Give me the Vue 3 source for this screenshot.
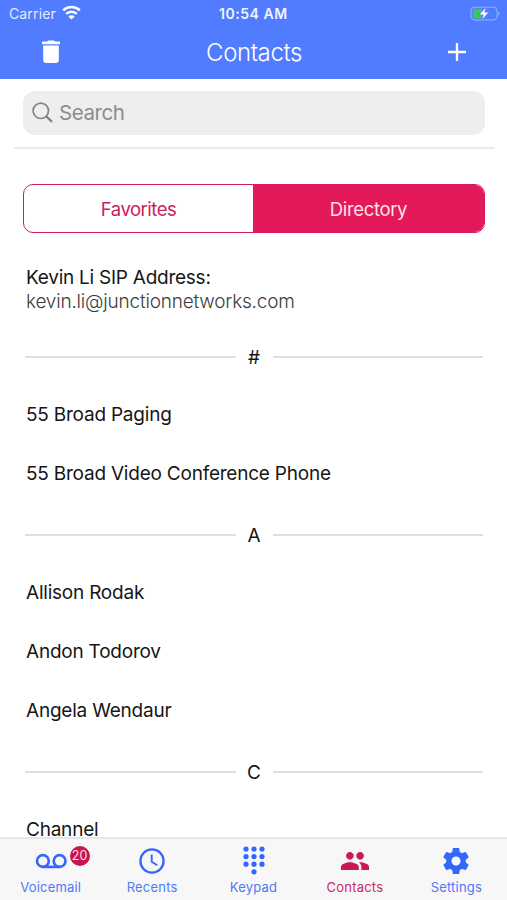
<script setup>
const sections = [
  { letter: '#', rows: ['55 Broad Paging', '55 Broad Video Conference Phone'] },
  { letter: 'A', rows: ['Allison Rodak', 'Andon Todorov', 'Angela Wendaur'] },
  { letter: 'C', rows: ['Channel'] },
]
const dots = [
  [3, 3], [11, 3], [19, 3],
  [3, 10.6], [11, 10.6], [19, 10.6],
  [3, 18.2], [11, 18.2], [19, 18.2],
  [11, 25.8],
]
</script>

<template>
  <div class="screen">
    <header class="header">
      <div class="status">
        <div class="carrier">
          <span>Carrier</span>
          <svg width="19" height="15" viewBox="0 0 19 15" fill="none" stroke="#fff" stroke-width="2.5">
            <path d="M1.2 5.400a11.800 11.800 0 0 1 16.600 0" />
            <path d="M4.200 8.800a7.600 7.600 0 0 1 10.600 0" />
            <path d="M9.500 14.600 6.300 11.500a4.500 4.500 0 0 1 6.400 0Z" fill="#fff" stroke="none" />
          </svg>
        </div>
        <span class="time">10:54 AM</span>
        <svg class="battery" width="31" height="16" viewBox="0 0 31 16">
          <rect x="1" y="1.200" width="26" height="12.800" rx="3.600" fill="none" stroke="#fff" stroke-opacity=".4" />
          <path d="M28.500 5.500q2 2.100 0 4.200Z" fill="#fff" fill-opacity=".5" />
          <path d="M5 2.800h7v9.600H5a2 2 0 0 1-2-2V4.800a2 2 0 0 1 2-2Z" fill="#37c75b" />
          <path d="M15.700 2 9.600 8.600h4L12.300 13l6-6.600h-4Z" fill="#fff" stroke="#527cff" stroke-width="1.200" paint-order="stroke" />
        </svg>
      </div>
      <div class="titlebar">
        <svg width="18" height="24" viewBox="0 0 18 24" fill="#fff">
          <path d="M0 1.500h5L6 .5h6l1 1h5v2.700H0ZM1.200 5.400h15.600v15.200a2.400 2.400 0 0 1-2.400 2.400H3.600a2.400 2.400 0 0 1-2.400-2.400Z" />
        </svg>
        <h1>Contacts</h1>
        <svg width="18" height="18" viewBox="0 0 18 18" stroke="#fff" stroke-width="2.300">
          <path d="M9 0v18M0 9h18" />
        </svg>
      </div>
    </header>

    <main class="content">
      <div class="searchwrap">
        <div class="search">
          <svg width="21" height="21" viewBox="0 0 21 21" fill="none" stroke="#858587">
            <circle cx="8.800" cy="8.800" r="7.700" stroke-width="1.700" />
            <path d="m14.300 14.300 5.700 5.500" stroke-width="2.300" />
          </svg>
          <span>Search</span>
        </div>
      </div>
      <div class="segment">
        <div class="seg">Favorites</div>
        <div class="seg active">Directory</div>
      </div>
      <div class="address">
        <div class="label">Kevin Li SIP Address:</div>
        <div class="sip">kevin.li@junctionnetworks.com</div>
      </div>
      <section v-for="s in sections" :key="s.letter">
        <div class="divider"><span>{{ s.letter }}</span></div>
        <div v-for="name in s.rows" :key="name" class="row">{{ name }}</div>
      </section>
    </main>

    <nav class="tabs">
      <div class="tab">
        <div class="icon">
          <svg width="32" height="16" viewBox="0 0 32 16" fill="none" stroke="#3366fa" stroke-width="2.600">
            <circle cx="7.900" cy="8" r="5.900" />
            <circle cx="24.600" cy="8" r="5.900" />
            <path d="M7.900 13.900h16.700" />
          </svg>
          <span class="badge">20</span>
        </div>
        <span>Voicemail</span>
      </div>
      <div class="tab">
        <div class="icon">
          <svg width="26" height="26" viewBox="0 0 26 26" fill="none" stroke="#3366fa">
            <circle cx="13" cy="13" r="11.600" stroke-width="2.300" />
            <path d="M12.700 6.500v7.200l5.600 3.500" stroke-width="1.900" />
          </svg>
        </div>
        <span>Recents</span>
      </div>
      <div class="tab">
        <div class="icon">
          <svg class="keypad" width="22" height="29" viewBox="0 0 22 29" fill="#3366fa">
            <circle v-for="(d, i) in dots" :key="i" :cx="d[0]" :cy="d[1]" r="2.600" />
          </svg>
        </div>
        <span>Keypad</span>
      </div>
      <div class="tab current">
        <div class="icon">
          <svg width="28" height="18" viewBox="1 5 22 14" preserveAspectRatio="none" fill="#c9185a">
            <path d="M16 11c1.660 0 2.990-1.340 2.990-3S17.660 5 16 5s-3 1.340-3 3 1.340 3 3 3zm-8 0c1.660 0 2.990-1.340 2.990-3S9.660 5 8 5 5 6.340 5 8s1.340 3 3 3zm0 2c-2.330 0-7 1.170-7 3.500V19h14v-2.500c0-2.330-4.670-3.500-7-3.500zm8 0c-.290 0-.620.020-.970.050 1.160.840 1.970 1.970 1.970 3.450V19h6v-2.500c0-2.330-4.670-3.500-7-3.500z" />
          </svg>
        </div>
        <span>Contacts</span>
      </div>
      <div class="tab">
        <div class="icon">
          <svg width="26" height="26" viewBox="2 2 20 20" fill="#3366fa">
            <path d="M19.430 12.980c.040-.320.070-.640.070-.980s-.030-.660-.070-.980l2.110-1.650c.190-.150.240-.420.120-.640l-2-3.460c-.120-.220-.390-.300-.610-.220l-2.490 1c-.520-.400-1.080-.730-1.690-.980l-.380-2.650C14.460 2.180 14.250 2 14 2h-4c-.250 0-.460.180-.490.420l-.380 2.650c-.610.250-1.170.590-1.690.980l-2.490-1c-.230-.090-.490 0-.610.220l-2 3.460c-.130.220-.070.490.120.640l2.110 1.650c-.040.320-.070.650-.070.980s.030.660.070.980l-2.110 1.650c-.190.150-.240.420-.120.640l2 3.460c.120.220.390.300.610.220l2.490-1c.520.400 1.080.730 1.690.980l.380 2.650c.030.240.240.420.490.420h4c.250 0 .460-.180.490-.420l.380-2.650c.610-.250 1.170-.590 1.690-.980l2.490 1c.230.090.490 0 .610-.220l2-3.460c.120-.220.070-.490-.120-.640l-2.110-1.650zM12 15.500c-1.930 0-3.500-1.570-3.500-3.500s1.570-3.500 3.500-3.500 3.500 1.570 3.500 3.500-1.570 3.500-3.500 3.500z" />
          </svg>
        </div>
        <span>Settings</span>
      </div>
    </nav>
  </div>
</template>

<style>
body {
  background: #fff;
}
</style>

<style scoped>
.screen {
  box-sizing: border-box;
  width: 507px;
  height: 900px;
  display: flex;
  flex-direction: column;
  overflow: hidden;
  background: #fff;
  color: #161616;
  font-family: Inter, "Liberation Sans", sans-serif;
}
.header {
  flex: none;
  height: 79px;
  background: #527cff;
  color: #fff;
}
.status {
  height: 27px;
  padding: 0 6px 0 9px;
  display: grid;
  grid-template-columns: 210px auto 1fr;
  align-items: center;
  font-size: 14px;
}
.carrier {
  display: flex;
  align-items: center;
  gap: 6px;
  color: #e6ecff;
  letter-spacing: 0.14px;
}
.carrier svg {
  margin-top: -3px;
}
.time {
  font-weight: 600;
  font-size: 14px;
  color: #f0f4ff;
  letter-spacing: 0.55px;
}
.battery {
  justify-self: end;
}
.titlebar {
  height: 50px;
  padding: 0 41px 0 42px;
  display: flex;
  justify-content: space-between;
  align-items: center;
}
h1 {
  margin: 0;
  font-size: 24px;
  font-weight: 300;
  letter-spacing: -0.4px;
}
.content {
  flex: 1;
  min-height: 0;
  overflow: hidden;
}
.searchwrap {
  margin: 0 12px 0 14px;
  padding: 12px 10px 12px 9px;
  border-bottom: 2px solid #ececec;
}
.search {
  box-sizing: border-box;
  height: 44px;
  padding: 0 0 1px 9px;
  display: flex;
  align-items: center;
  gap: 6px;
  border-radius: 12px;
  background: #eee;
  color: #8c8c8e;
  font-size: 20.5px;
  letter-spacing: -0.45px;
}
.segment {
  box-sizing: border-box;
  margin: 35px 22px 0 23px;
  height: 49px;
  display: flex;
  overflow: hidden;
  border: 1.5px solid #d51b59;
  border-radius: 10px;
}
.seg {
  width: 229px;
  display: flex;
  align-items: center;
  justify-content: center;
  color: #c9205f;
  font-size: 18.5px;
  letter-spacing: -0.5px;
}
.seg.active {
  flex: 1;
  background: #e31959;
  color: #ffe3ec;
  letter-spacing: -0.35px;
}
.address {
  padding: 33px 26px 0;
  font-size: 19px;
  line-height: 24px;
}
.label {
  letter-spacing: -0.25px;
}
.sip {
  color: #3c3c3c;
  font-weight: 300;
  letter-spacing: -0.2px;
}
.divider {
  height: 61px;
  padding: 4px 24px 0 25px;
  box-sizing: border-box;
  display: flex;
  align-items: center;
  font-size: 19px;
}
.divider::before,
.divider::after {
  content: '';
  flex: 1;
  height: 2px;
  background: #dfdfdf;
}
.divider span {
  width: 37px;
  line-height: 22px;
  padding-top: 2px;
  text-align: center;
}
section:first-of-type .divider {
  margin-top: 10px;
}
.row {
  box-sizing: border-box;
  height: 58.700px;
  padding: 1px 0 0 26px;
  display: flex;
  align-items: center;
  font-size: 19px;
  line-height: 22px;
  letter-spacing: -0.22px;
}
.tabs {
  box-sizing: border-box;
  flex: none;
  height: 63px;
  display: flex;
  border-top: 2px solid #e6e6e6;
  background: #f7f7f7;
}
.tab {
  flex: 1;
  display: flex;
  flex-direction: column;
  align-items: center;
  color: #5079f4;
  font-size: 13px;
  letter-spacing: 0.2px;
}
.tab > span {
  line-height: 16px;
}
.icon {
  box-sizing: border-box;
  position: relative;
  height: 40px;
  padding-top: 3px;
  display: flex;
  align-items: center;
}
.keypad {
  margin-top: -1px;
}
.tab.current {
  color: #cb2a65;
}
.badge {
  position: absolute;
  left: 35px;
  top: 7px;
  width: 20px;
  height: 20px;
  border-radius: 50%;
  background: #c9154f;
  color: #fbdde7;
  font-size: 12.5px;
  line-height: 20px;
  text-align: center;
}
</style>
